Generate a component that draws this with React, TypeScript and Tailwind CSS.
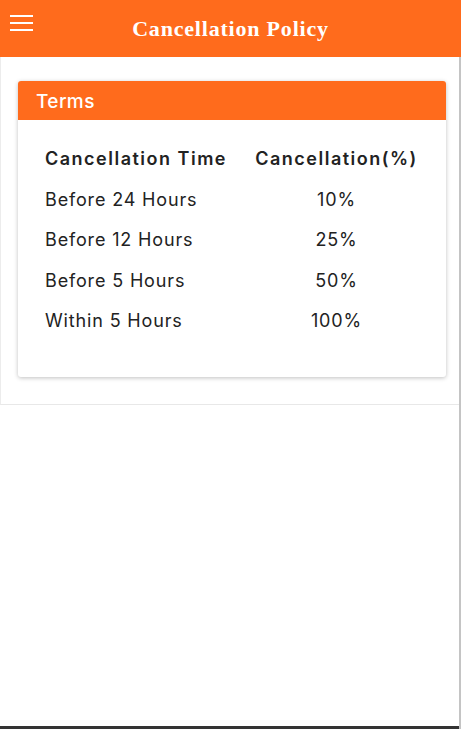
import * as React from "react";

const rows = [
  { time: "Before 24 Hours", pct: "10%" },
  { time: "Before 12 Hours", pct: "25%" },
  { time: "Before 5 Hours", pct: "50%" },
  { time: "Within 5 Hours", pct: "100%" },
];

export default function App() {
  return (
    <div className="flex h-[729px] w-[461px] flex-col bg-white font-['Inter',sans-serif] text-[#222]">
      {/* Top bar */}
      <header className="relative flex h-[57px] shrink-0 items-center justify-center bg-[#ff6b1c]">
        <button className="absolute left-[10px] top-[15px] flex w-[23px] flex-col gap-[5px]" aria-label="Menu">
          <span className="h-[2px] w-full bg-white" />
          <span className="h-[2px] w-full bg-white" />
          <span className="h-[2px] w-full bg-white" />
        </button>
        <h1 className="font-['Liberation_Serif',serif] text-[22px] font-bold tracking-[0.8px] text-white">
          Cancellation Policy
        </h1>
      </header>

      <main className="flex flex-1 flex-col border-r-2 border-r-[#c4c4c4]">
        <section className="flex border-b border-l border-b-[#e8e8e8] border-l-[#ececec] pb-[27px] pl-[17px] pr-[11px] pt-[24px]">
          <div className="w-[428px] shrink-0 overflow-hidden rounded-[3px] bg-white shadow-[0_1px_4px_rgba(0,0,0,0.25)]">
            <div className="flex h-[39px] items-center bg-[#ff6b1c] px-[18px] pt-[3px] text-[19px] font-medium tracking-[0.4px] text-white">
              Terms
            </div>
            <div className="px-[27px] pb-[35px] pt-[19px]">
              <div className="grid grid-cols-[210px_163px] text-[18px] leading-[40.5px]">
                <div className="font-semibold tracking-[1.5px]">Cancellation Time</div>
                <div className="text-center font-semibold tracking-[1.5px]">Cancellation(%)</div>
                {rows.map((r) => (
                  <React.Fragment key={r.time}>
                    <div className="tracking-[0.85px]">{r.time}</div>
                    <div className="text-center tracking-[0.85px]">{r.pct}</div>
                  </React.Fragment>
                ))}
              </div>
            </div>
          </div>
        </section>

        <div className="flex-1" />
        <div className="h-[3px] w-full bg-[#333]" />
      </main>
    </div>
  );
}
